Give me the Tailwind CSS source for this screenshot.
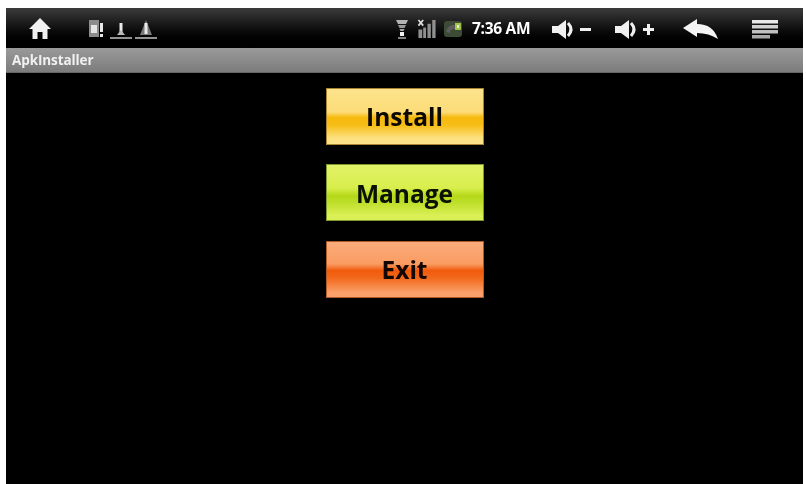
<!DOCTYPE html>
<html lang="en">
<head>
    <meta charset="UTF-8">
    <title>ApkInstaller</title>
    <script src="https://cdn.jsdelivr.net/npm/@tailwindcss/browser@4"></script>
</head>
<body class="bg-white w-[806px] h-[484px] overflow-hidden font-['Open_Sans',sans-serif]">
    <div class="ml-[6px] mt-[8px] w-[797px] h-[480px] bg-black flex flex-col blur-[0.7px]">
        <!-- status bar -->
        <div class="h-[40px] flex items-center text-white bg-gradient-to-b from-[#3c3c3c] via-[#111111] to-black">
            <svg class="ml-[22px] w-[24px] h-[24px]" viewBox="0 0 24 24" fill="#f0f0f0"><path d="M12 2 L23 13 H19.5 V23 H14.5 V16 H9.5 V23 H4.5 V13 H1 Z"/></svg>
            <div class="ml-[36px] mt-[2px] flex items-end gap-[3px] h-[20px]">
                <svg class="w-[16px] h-[20px] mr-[3px]" viewBox="0 0 16 20"><rect x="1" y="1" width="10" height="17" fill="#8c8c8c"/><rect x="3" y="6" width="6" height="8" fill="#e4e4e4"/><rect x="12" y="4" width="3" height="9" fill="#e8e8e8"/><rect x="12" y="15" width="3" height="3" fill="#e8e8e8"/></svg>
                <svg class="w-[22px] h-[20px]" viewBox="0 0 22 20"><path d="M11 4 V15" stroke="#e8e8e8" stroke-width="3"/><path d="M7 16 H15 L11 11 Z" fill="#bbbbbb"/><path d="M0 19 H22" stroke="#c4c4c4" stroke-width="1.5"/></svg>
                <svg class="w-[22px] h-[20px]" viewBox="0 0 22 20"><path d="M5 16 H17 L11 1 Z" fill="#777777"/><path d="M11 4 V15" stroke="#e8e8e8" stroke-width="3"/><path d="M0 19 H22" stroke="#c4c4c4" stroke-width="1.5"/></svg>
            </div>
            <div class="ml-auto mt-[2px] flex items-center">
                <svg class="w-[12px] h-[20px]" viewBox="0 0 12 20"><path d="M0 1 H12 L10 5 H2 Z" fill="#b4b4b4"/><path d="M2 6 H10 L8.5 9 H3.5 Z" fill="#9a9a9a"/><path d="M3.5 10 H8.5 L7.5 12 H4.5 Z" fill="#a8a8a8"/><rect x="4" y="13" width="4" height="4" fill="#f0f0f0"/><rect x="2" y="18" width="8" height="2" fill="#808080"/></svg>
                <svg class="ml-[9px] w-[20px] h-[20px]" viewBox="0 0 20 21"><path d="M1 1 L6 7 M6 1 L1 7" stroke="#e0e0e0" stroke-width="1.8"/><rect x="1" y="11" width="4" height="9" fill="#909090"/><rect x="6" y="9" width="3" height="11" fill="#909090"/><rect x="10.5" y="5" width="3.5" height="15" fill="#909090"/><rect x="15.5" y="1" width="3.5" height="19" fill="#909090"/></svg>
                <svg class="ml-[6px] w-[20px] h-[18px]" viewBox="0 0 18 18"><rect x="0" y="1" width="18" height="16" rx="3" fill="#3d4a35"/><path d="M2 12 Q3 6 9 5 H15 V9 H9 Q6 10 6 13 Z" fill="#5d5d5d"/><rect x="11" y="3" width="6" height="7" fill="#9fc24a"/><rect x="13" y="5" width="2" height="3" fill="#e8f0d0"/></svg>
                <span class="ml-[9px] w-[60px] text-[15.5px] font-bold whitespace-nowrap tracking-[-0.3px]">7:36 AM</span>
                <svg class="ml-[20px] w-[39px] h-[19px]" viewBox="0 0 39 19" fill="#f0f0f0"><path d="M0 6 H6 L14 0 V19 L6 13 H0 Z"/><path d="M16 3 Q22 9.5 16 16" fill="none" stroke="#f0f0f0" stroke-width="3"/><rect x="28" y="8" width="11" height="3"/></svg>
                <svg class="ml-[24px] w-[39px] h-[19px]" viewBox="0 0 39 19" fill="#f0f0f0"><path d="M0 6 H6 L14 0 V19 L6 13 H0 Z"/><path d="M16 3 Q22 9.5 16 16" fill="none" stroke="#f0f0f0" stroke-width="3"/><rect x="28" y="8" width="11" height="3"/><rect x="32" y="4" width="3" height="11"/></svg>
                <svg class="ml-[29px] w-[35px] h-[20px]" viewBox="0 0 35 20" fill="#f4f4f4"><path d="M0 9 L14 0 V5 Q30 5 35 20 Q26 14 14 14 V18 Z"/></svg>
                <svg class="ml-[34px] mr-[25px] w-[26px] h-[19px]" viewBox="0 0 26 19"><rect y="0" width="26" height="3.5" fill="#e8e8e8"/><rect y="5" width="26" height="3.5" fill="#d0d0d0"/><rect y="10" width="26" height="3.5" fill="#c0c0c0"/><rect y="15" width="18" height="3.5" fill="#a8a8a8"/></svg>
            </div>
        </div>
        <!-- title bar -->
        <div class="h-[25px] flex items-center pl-[6px] text-[13.5px] font-bold text-[#f0f0f0] tracking-[-0.1px] bg-gradient-to-b from-[#9a9a9a] to-[#7c7c7c] border-b border-[#666666]">ApkInstaller</div>
        <!-- buttons -->
        <div class="flex flex-col items-center pt-[15px]">
            <div class="w-[158px] h-[57px] pt-[2px] flex items-center justify-center text-[24.5px] font-bold text-[#0c0802] border border-[#a9852f] bg-[linear-gradient(to_bottom,#fce38c_0%,#fcdc78_42%,#f6b90c_52%,#f7be18_66%,#fddf7c_88%,#fce38c_100%)]">Install</div>
            <div class="mt-[19px] w-[158px] h-[57px] pt-[3px] flex items-center justify-center text-[24.5px] font-bold text-[#0a1204] border border-[#7f9a2c] bg-[linear-gradient(to_bottom,#e2f268_0%,#d8ee4c_42%,#b4d818_56%,#bede2a_68%,#daf056_92%,#daf056_100%)]">Manage</div>
            <div class="mt-[20px] w-[158px] h-[57px] pt-[2px] flex items-center justify-center text-[24.5px] font-bold text-[#140600] border border-[#b05a2a] bg-[linear-gradient(to_bottom,#fbac7c_0%,#fa9c62_40%,#f05a0c_52%,#f26a1c_66%,#faa06a_92%,#faa06a_100%)]">Exit</div>
        </div>
    </div>
</body>
</html>
